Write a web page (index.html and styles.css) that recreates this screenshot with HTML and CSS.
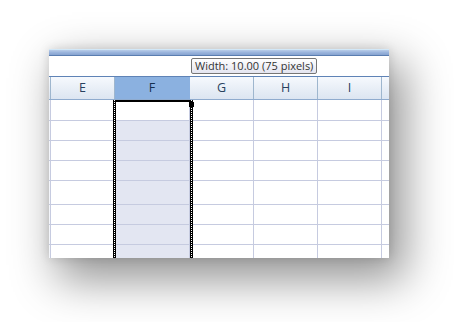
FILE: index.html
```html
<!DOCTYPE html>
<html lang="en">

<head>
  <meta charset="UTF-8">
  <meta name="viewport" content="width=device-width, initial-scale=1.0">
  <title>Column width</title>
  <link rel="stylesheet" href="styles.css">
</head>

<body>
  <div class="page">
    <div class="sheet">
      <div class="ribbon"></div>
      <div class="formula">
        <div class="tip">Width: 10.00 (75 pixels)</div>
      </div>
      <div class="heads">
        <div class="head stub"></div>
        <div class="head">E</div>
        <div class="head sel">F</div>
        <div class="head">G</div>
        <div class="head">H</div>
        <div class="head">I</div>
        <div class="head rest"></div>
      </div>
      <div class="grid">
        <div class="row first">
          <div class="cell stub"></div><div class="cell"></div><div class="cell active"></div><div class="cell"></div><div class="cell"></div><div class="cell"></div><div class="cell rest"></div>
        </div>
        <div class="row">
          <div class="cell stub"></div><div class="cell"></div><div class="cell on"></div><div class="cell"></div><div class="cell"></div><div class="cell"></div><div class="cell rest"></div>
        </div>
        <div class="row">
          <div class="cell stub"></div><div class="cell"></div><div class="cell on"></div><div class="cell"></div><div class="cell"></div><div class="cell"></div><div class="cell rest"></div>
        </div>
        <div class="row">
          <div class="cell stub"></div><div class="cell"></div><div class="cell on"></div><div class="cell"></div><div class="cell"></div><div class="cell"></div><div class="cell rest"></div>
        </div>
        <div class="row tall">
          <div class="cell stub"></div><div class="cell"></div><div class="cell on"></div><div class="cell"></div><div class="cell"></div><div class="cell"></div><div class="cell rest"></div>
        </div>
        <div class="row">
          <div class="cell stub"></div><div class="cell"></div><div class="cell on"></div><div class="cell"></div><div class="cell"></div><div class="cell"></div><div class="cell rest"></div>
        </div>
        <div class="row">
          <div class="cell stub"></div><div class="cell"></div><div class="cell on"></div><div class="cell"></div><div class="cell"></div><div class="cell"></div><div class="cell rest"></div>
        </div>
        <div class="row cut">
          <div class="cell stub"></div><div class="cell"></div><div class="cell on"></div><div class="cell"></div><div class="cell"></div><div class="cell"></div><div class="cell rest"></div>
        </div>

        <div class="ants">
          <div class="handle"></div>
        </div>
      </div>
    </div>
  </div>
</body>

</html>
```

FILE: styles.css
```css
html,
body {
  margin: 0;
  background: #fff;
  font-family: "Open Sans", "Liberation Sans", sans-serif;
}

.page {
  height: 322px;
  padding: 49px 0 0 49px;
  box-sizing: border-box;
  overflow: hidden;
}

.sheet {
  width: 340px;
  background: #fff;
  box-shadow: 12px 18px 42px 4px rgba(0, 0, 0, 0.42), 0 0 10px rgba(0, 0, 0, 0.14);
}

.ribbon {
  height: 5px;
  border-top: 1px solid #d2e8f8;
  background: linear-gradient(#b9cde9, #9ab4dc 50%, #86a3d0);
  border-bottom: 1px solid #5a7db0;
}

.formula {
  height: 20px;
  position: relative;
}

.tip {
  position: absolute;
  left: 142px;
  top: 2px;
  height: 14px;
  padding: 0 3px;
  border: 1px solid #767676;
  border-radius: 2px;
  background: linear-gradient(#ffffff, #e4e5f0);
  font-size: 11px;
  line-height: 14px;
  color: #333;
  white-space: nowrap;
}

.heads {
  display: grid;
  grid-template-columns: 2px 64px 75px 64px 64px 64px 7px;
  height: 22px;
  border-top: 1px solid #5f83b6;
  box-shadow: inset 0 1px 0 #c9dbef;
  border-bottom: 1px solid #8fabce;
}

.head {
  border-right: 1px solid #9eb6ce;
  background: linear-gradient(#f6f9fd, #dce5f1);
  font-size: 12.5px;
  line-height: 22px;
  text-align: center;
  color: #27415f;
}

.head.sel {
  background: #8bb1e0;
  border-right-color: #8bb1e0;
  color: #15304f;
}

.head.rest {
  border-right: none;
}

.grid {
  position: relative;
  height: 158px;
  overflow: hidden;
}

.row {
  display: grid;
  grid-template-columns: 2px 64px 75px 64px 64px 64px 7px;
  box-sizing: border-box;
  height: 20px;
  border-bottom: 1px solid #c6cbe0;
}

.row.first {
  height: 21px;
}

.row.tall {
  height: 24px;
}

.row.cut {
  border-bottom: none;
}

.cell {
  border-right: 1px solid #c6cbe0;
}

.cell.stub {
  background: #f4f6fb;
}

.cell.on {
  background: #e3e6f2;
}

.cell.rest {
  border-right: none;
}

.ants {
  position: absolute;
  left: 65px;
  top: 0;
  bottom: 0;
  width: 77px;
  border-top: 2px solid #000;
  box-sizing: border-box;
}

.ants::before,
.ants::after {
  content: "";
  position: absolute;
  top: -2px;
  bottom: 0;
  width: 1px;
  border-left: 1px solid #000;
  border-right: 1px solid #000;
  background: repeating-linear-gradient(#fff 0 1px, #000 1px 2px);
}

.ants::before {
  left: -1px;
}

.ants::after {
  right: -2px;
}

.handle {
  position: absolute;
  right: -3px;
  top: 0;
  width: 5px;
  height: 5px;
  background: #000;
  z-index: 1;
}
```
